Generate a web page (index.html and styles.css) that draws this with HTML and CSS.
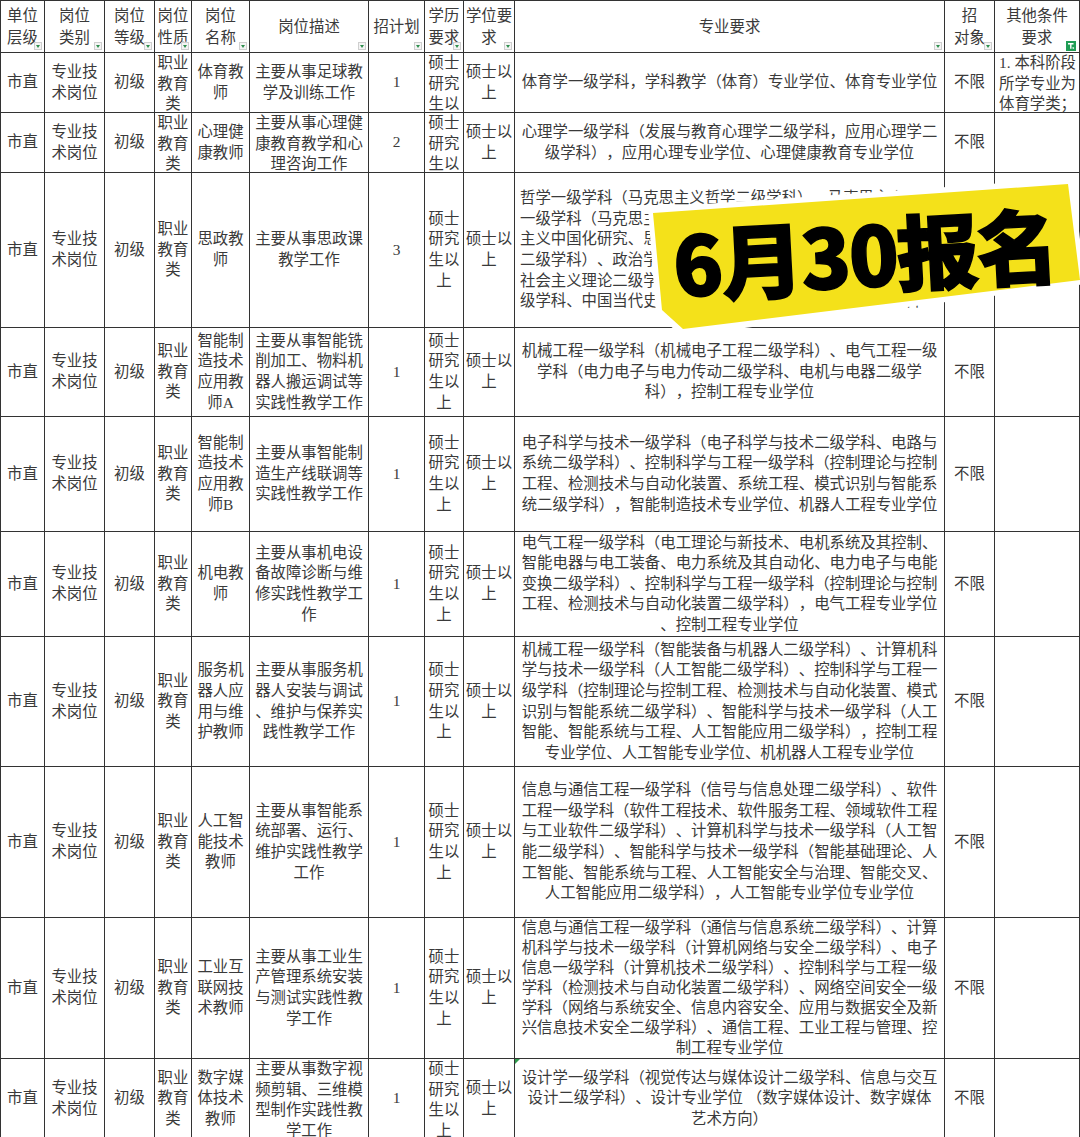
FILE: index.html
```html
<!DOCTYPE html>
<html lang="zh-CN">
<head>
<meta charset="utf-8">
<title>岗位表</title>
<link rel="stylesheet" href="styles.css">
</head>
<body>
<div class="sheet">
  <div class="grid">
    <!-- header -->
    <div class="c h"><span>单位<br>层级</span><i class="flt"></i></div>
    <div class="c h"><span>岗位<br>类别</span><i class="flt"></i></div>
    <div class="c h"><span>岗位<br>等级</span><i class="flt"></i></div>
    <div class="c h"><span>岗位<br>性质</span><i class="flt"></i></div>
    <div class="c h"><span>岗位<br>名称</span><i class="flt"></i></div>
    <div class="c h"><span>岗位描述</span><i class="flt"></i></div>
    <div class="c h"><span>招计划</span><i class="flt"></i></div>
    <div class="c h"><span>学历<br>要求</span><i class="flt"></i></div>
    <div class="c h"><span>学位要<br>求</span><i class="flt"></i></div>
    <div class="c h"><span>专业要求</span><i class="flt"></i></div>
    <div class="c h"><span>招<br>对象</span><i class="flt"></i></div>
    <div class="c h"><span>其他条件<br>要求</span><svg class="flt-on" viewBox="0 0 10 10" width="10" height="10"><rect width="10" height="10" fill="#1f9d55"/><path d="M2 2.8h5.5M4.8 2.8v5M6.6 6.4l1.2 1.2" stroke="#fff" stroke-width="1.4" fill="none"/></svg></div>

    <!-- row 1 -->
    <div class="c"><span>市直</span></div>
    <div class="c"><span>专业技<br>术岗位</span></div>
    <div class="c"><span>初级</span></div>
    <div class="c"><span>职业<br>教育<br>类</span></div>
    <div class="c"><span>体育教<br>师</span></div>
    <div class="c"><span>主要从事足球教<br>学及训练工作</span></div>
    <div class="c"><span>1</span></div>
    <div class="c"><span>硕士<br>研究<br>生以<br>上</span></div>
    <div class="c"><span>硕士以<br>上</span></div>
    <div class="c major"><span>体育学一级学科，学科教学（体育）专业学位、体育专业学位</span></div>
    <div class="c"><span>不限</span></div>
    <div class="c other"><span>1. 本科阶段<br>所学专业为<br>体育学类；</span></div>

    <!-- row 2 -->
    <div class="c"><span>市直</span></div>
    <div class="c"><span>专业技<br>术岗位</span></div>
    <div class="c"><span>初级</span></div>
    <div class="c"><span>职业<br>教育<br>类</span></div>
    <div class="c"><span>心理健<br>康教师</span></div>
    <div class="c"><span>主要从事心理健<br>康教育教学和心<br>理咨询工作</span></div>
    <div class="c"><span>2</span></div>
    <div class="c"><span>硕士<br>研究<br>生以<br>上</span></div>
    <div class="c"><span>硕士以<br>上</span></div>
    <div class="c major"><span>心理学一级学科（发展与教育心理学二级学科，应用心理学二<br>级学科），应用心理专业学位、心理健康教育专业学位</span></div>
    <div class="c"><span>不限</span></div>
    <div class="c other"></div>

    <!-- row 3 -->
    <div class="c"><span>市直</span></div>
    <div class="c"><span>专业技<br>术岗位</span></div>
    <div class="c"><span>初级</span></div>
    <div class="c"><span>职业<br>教育<br>类</span></div>
    <div class="c"><span>思政教<br>师</span></div>
    <div class="c"><span>主要从事思政课<br>教学工作</span></div>
    <div class="c"><span>3</span></div>
    <div class="c"><span>硕士<br>研究<br>生以<br>上</span></div>
    <div class="c"><span>硕士以<br>上</span></div>
    <div class="c major left"><span>哲学一级学科（马克思主义哲学二级学科）、马克思主义理论<br>一级学科（马克思主义基本原理、马克思主义发展史、马克思<br>主义中国化研究、思想政治教育、中国近现代史基本问题研究<br>二级学科）、政治学一级学科（中共党史二级学科、中国特色<br>社会主义理论二级学科）、中国史一级学科（中国近现代史二<br>级学科、中国当代史二级学科），中共党史党建学一级学科</span></div>
    <div class="c"><span>不限</span></div>
    <div class="c other"></div>

    <!-- row 4 -->
    <div class="c"><span>市直</span></div>
    <div class="c"><span>专业技<br>术岗位</span></div>
    <div class="c"><span>初级</span></div>
    <div class="c"><span>职业<br>教育<br>类</span></div>
    <div class="c"><span>智能制<br>造技术<br>应用教<br>师A</span></div>
    <div class="c"><span>主要从事智能铣<br>削加工、物料机<br>器人搬运调试等<br>实践性教学工作</span></div>
    <div class="c"><span>1</span></div>
    <div class="c"><span>硕士<br>研究<br>生以<br>上</span></div>
    <div class="c"><span>硕士以<br>上</span></div>
    <div class="c major"><span>机械工程一级学科（机械电子工程二级学科）、电气工程一级<br>学科（电力电子与电力传动二级学科、电机与电器二级学<br>科），控制工程专业学位</span></div>
    <div class="c"><span>不限</span></div>
    <div class="c other"></div>

    <!-- row 5 -->
    <div class="c"><span>市直</span></div>
    <div class="c"><span>专业技<br>术岗位</span></div>
    <div class="c"><span>初级</span></div>
    <div class="c"><span>职业<br>教育<br>类</span></div>
    <div class="c"><span>智能制<br>造技术<br>应用教<br>师B</span></div>
    <div class="c"><span>主要从事智能制<br>造生产线联调等<br>实践性教学工作</span></div>
    <div class="c"><span>1</span></div>
    <div class="c"><span>硕士<br>研究<br>生以<br>上</span></div>
    <div class="c"><span>硕士以<br>上</span></div>
    <div class="c major"><span>电子科学与技术一级学科（电子科学与技术二级学科、电路与<br>系统二级学科）、控制科学与工程一级学科（控制理论与控制<br>工程、检测技术与自动化装置、系统工程、模式识别与智能系<br>统二级学科），智能制造技术专业学位、机器人工程专业学位</span></div>
    <div class="c"><span>不限</span></div>
    <div class="c other"></div>

    <!-- row 6 -->
    <div class="c"><span>市直</span></div>
    <div class="c"><span>专业技<br>术岗位</span></div>
    <div class="c"><span>初级</span></div>
    <div class="c"><span>职业<br>教育<br>类</span></div>
    <div class="c"><span>机电教<br>师</span></div>
    <div class="c"><span>主要从事机电设<br>备故障诊断与维<br>修实践性教学工<br>作</span></div>
    <div class="c"><span>1</span></div>
    <div class="c"><span>硕士<br>研究<br>生以<br>上</span></div>
    <div class="c"><span>硕士以<br>上</span></div>
    <div class="c major"><span>电气工程一级学科（电工理论与新技术、电机系统及其控制、<br>智能电器与电工装备、电力系统及其自动化、电力电子与电能<br>变换二级学科）、控制科学与工程一级学科（控制理论与控制<br>工程、检测技术与自动化装置二级学科），电气工程专业学位<br>、控制工程专业学位</span></div>
    <div class="c"><span>不限</span></div>
    <div class="c other"></div>

    <!-- row 7 -->
    <div class="c"><span>市直</span></div>
    <div class="c"><span>专业技<br>术岗位</span></div>
    <div class="c"><span>初级</span></div>
    <div class="c"><span>职业<br>教育<br>类</span></div>
    <div class="c"><span>服务机<br>器人应<br>用与维<br>护教师</span></div>
    <div class="c"><span>主要从事服务机<br>器人安装与调试<br>、维护与保养实<br>践性教学工作</span></div>
    <div class="c"><span>1</span></div>
    <div class="c"><span>硕士<br>研究<br>生以<br>上</span></div>
    <div class="c"><span>硕士以<br>上</span></div>
    <div class="c major"><span>机械工程一级学科（智能装备与机器人二级学科）、计算机科<br>学与技术一级学科（人工智能二级学科）、控制科学与工程一<br>级学科（控制理论与控制工程、检测技术与自动化装置、模式<br>识别与智能系统二级学科）、智能科学与技术一级学科（人工<br>智能、智能系统与工程、人工智能应用二级学科），控制工程<br>专业学位、人工智能专业学位、机机器人工程专业学位</span></div>
    <div class="c"><span>不限</span></div>
    <div class="c other"></div>

    <!-- row 8 -->
    <div class="c"><span>市直</span></div>
    <div class="c"><span>专业技<br>术岗位</span></div>
    <div class="c"><span>初级</span></div>
    <div class="c"><span>职业<br>教育<br>类</span></div>
    <div class="c"><span>人工智<br>能技术<br>教师</span></div>
    <div class="c"><span>主要从事智能系<br>统部署、运行、<br>维护实践性教学<br>工作</span></div>
    <div class="c"><span>1</span></div>
    <div class="c"><span>硕士<br>研究<br>生以<br>上</span></div>
    <div class="c"><span>硕士以<br>上</span></div>
    <div class="c major"><span>信息与通信工程一级学科（信号与信息处理二级学科）、软件<br>工程一级学科（软件工程技术、软件服务工程、领域软件工程<br>与工业软件二级学科）、计算机科学与技术一级学科（人工智<br>能二级学科）、智能科学与技术一级学科（智能基础理论、人<br>工智能、智能系统与工程、人工智能安全与治理、智能交叉、<br>人工智能应用二级学科），人工智能专业学位专业学位</span></div>
    <div class="c"><span>不限</span></div>
    <div class="c other"></div>

    <!-- row 9 -->
    <div class="c"><span>市直</span></div>
    <div class="c"><span>专业技<br>术岗位</span></div>
    <div class="c"><span>初级</span></div>
    <div class="c"><span>职业<br>教育<br>类</span></div>
    <div class="c"><span>工业互<br>联网技<br>术教师</span></div>
    <div class="c"><span>主要从事工业生<br>产管理系统安装<br>与测试实践性教<br>学工作</span></div>
    <div class="c"><span>1</span></div>
    <div class="c"><span>硕士<br>研究<br>生以<br>上</span></div>
    <div class="c"><span>硕士以<br>上</span></div>
    <div class="c major tight"><span>信息与通信工程一级学科（通信与信息系统二级学科）、计算<br>机科学与技术一级学科（计算机网络与安全二级学科）、电子<br>信息一级学科（计算机技术二级学科）、控制科学与工程一级<br>学科（检测技术与自动化装置二级学科）、网络空间安全一级<br>学科（网络与系统安全、信息内容安全、应用与数据安全及新<br>兴信息技术安全二级学科）、通信工程、工业工程与管理、控<br>制工程专业学位</span></div>
    <div class="c"><span>不限</span></div>
    <div class="c other"></div>

    <!-- row 10 -->
    <div class="c"><span>市直</span></div>
    <div class="c"><span>专业技<br>术岗位</span></div>
    <div class="c"><span>初级</span></div>
    <div class="c"><span>职业<br>教育<br>类</span></div>
    <div class="c"><span>数字媒<br>体技术<br>教师</span></div>
    <div class="c"><span>主要从事数字视<br>频剪辑、三维模<br>型制作实践性教<br>学工作</span></div>
    <div class="c"><span>1</span></div>
    <div class="c"><span>硕士<br>研究<br>生以<br>上</span></div>
    <div class="c"><span>硕士以<br>上</span></div>
    <div class="c major"><i class="mark"></i><span>设计学一级学科（视觉传达与媒体设计二级学科、信息与交互<br>设计二级学科）、设计专业学位 （数字媒体设计、数字媒体<br>艺术方向）</span></div>
    <div class="c"><span>不限</span></div>
    <div class="c other"></div>
  </div>

  <div class="sticker">
    <svg class="sticker-bg" viewBox="0 0 440 165" width="440" height="165">
      <polygon points="3,32 428,2 440,108 38,160 11,139" fill="#ffffff"/>
      <polygon points="8,37 423,8 435,104 38,153 17,134" fill="#f4e11a"/>
    </svg>
    <div class="sticker-text">6月30报名</div>
  </div>
</div>
</body>
</html>
```

FILE: styles.css
```css
html, body {
  margin: 0;
  padding: 0;
  background: #ffffff;
}

body {
  width: 1080px;
  height: 1137px;
  overflow: hidden;
  font-family: "Liberation Serif", "Noto Sans CJK SC", serif;
  font-size: 15.4px;
  color: #3a3a3a;
  text-spacing-trim: space-all;
}

.sheet {
  position: relative;
  width: 1080px;
}

.grid {
  display: grid;
  grid-template-columns: 44px 60px 50px 37px 58px 119px 56px 39px 51px 430px 50px 85px;
  grid-template-rows: 52px 60px 60px 155px 89px 115px 105px 130px 151px 141px 80px;
  width: max-content;
  border-left: 1px solid #333;
  border-top: 1px solid #333;
}

.c {
  position: relative;
  display: flex;
  flex-direction: column;
  overflow: hidden;
  padding: 0 1px;
  border-right: 1px solid #333;
  border-bottom: 1px solid #333;
  text-align: center;
  line-height: 20.6px;
  white-space: nowrap;
}

.c > span {
  display: block;
  margin: auto 0;
}

.h {
  line-height: 22px;
  color: #3a3a3a;
}

.major {
  padding: 0 5px;
}

.major.left {
  text-align: left;
}

.major.tight {
  line-height: 20px;
}

.other {
  text-align: left;
  padding: 0 0 0 4px;
}

/* filter dropdown buttons */
.flt {
  position: absolute;
  right: 2px;
  bottom: 2px;
  width: 8px;
  height: 8px;
  box-sizing: border-box;
  border: 1px solid #cfcfcf;
  background: #f4f4f4;
}

.flt::after {
  content: "";
  position: absolute;
  left: 1px;
  top: 2px;
  border-left: 2.5px solid transparent;
  border-right: 2.5px solid transparent;
  border-top: 3px solid #2f8f4e;
}

.flt-on {
  position: absolute;
  right: 3px;
  bottom: 1px;
  display: block;
}

/* comment indicator */
.mark {
  position: absolute;
  left: 0;
  top: 0;
  width: 0;
  height: 0;
  border-top: 5px solid #2f9a4c;
  border-right: 5px solid transparent;
}

/* sticker banner */
.sticker {
  position: absolute;
  left: 645px;
  top: 176px;
  width: 440px;
  height: 165px;
}

.sticker-bg {
  position: absolute;
  left: 0;
  top: 0;
  display: block;
}

.sticker-text {
  position: absolute;
  left: 0;
  top: 0;
  width: 440px;
  height: 165px;
  box-sizing: border-box;
  padding-bottom: 14px;
  display: flex;
  align-items: center;
  justify-content: center;
  font-family: "Noto Sans CJK SC", sans-serif;
  font-weight: 900;
  font-size: 82px;
  line-height: 1;
  letter-spacing: -2px;
  color: #000;
  -webkit-text-stroke: 1.5px #000;
  white-space: nowrap;
  transform: rotate(-3deg);
}
```
